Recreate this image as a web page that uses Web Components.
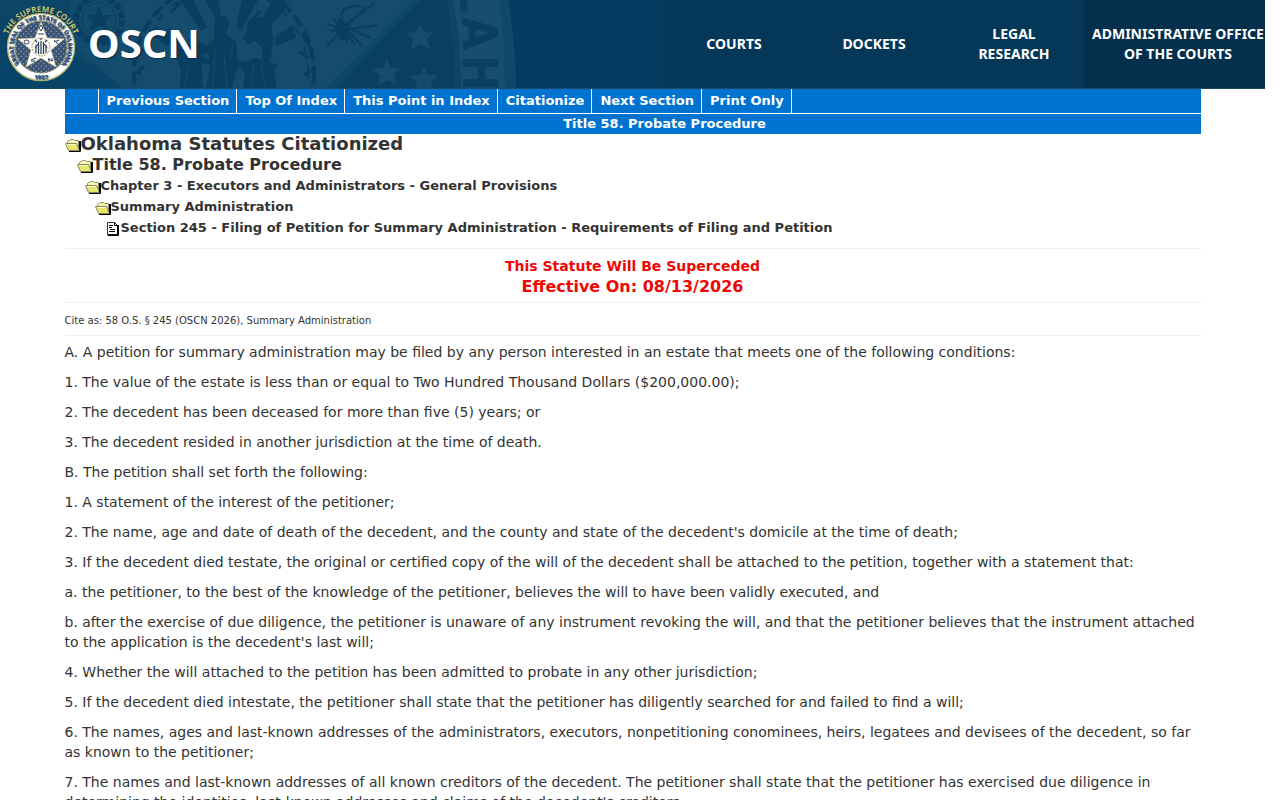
<!DOCTYPE html>
<html lang="en">
<head>
<meta charset="utf-8">
<title>OSCN - Title 58. Probate Procedure</title>
<style>
    html { background: #fff; }
    body {
        margin: 0 15px 0 0;
        color: #333;
        font-family: "DejaVu Sans", Verdana, sans-serif;
        font-size: 14px;
        line-height: 20px;
    }
    main { display: block; max-width: 1136px; margin: 0 auto; }
    statute-body p { margin: 0 0 10px; }
</style>
</head>
<body>
    <oscn-header>
        <oscn-nav-item href="#courts">COURTS</oscn-nav-item>
        <oscn-nav-item href="#dockets">DOCKETS</oscn-nav-item>
        <oscn-nav-item href="#research">LEGAL<br>RESEARCH</oscn-nav-item>
        <oscn-nav-item href="#aoc" wide>ADMINISTRATIVE OFFICE<br>OF THE COURTS</oscn-nav-item>
    </oscn-header>

    <main>
        <section-toolbar heading="Title 58. Probate Procedure">
            <toolbar-link href="#previous">Previous Section</toolbar-link>
            <toolbar-link href="#top">Top Of Index</toolbar-link>
            <toolbar-link href="#point">This Point in Index</toolbar-link>
            <toolbar-link href="#citationize">Citationize</toolbar-link>
            <toolbar-link href="#next">Next Section</toolbar-link>
            <toolbar-link href="#print">Print Only</toolbar-link>
        </section-toolbar>

        <index-tree>
            <index-node level="1">Oklahoma Statutes Citationized</index-node>
            <index-node level="2">Title 58. Probate Procedure</index-node>
            <index-node level="3">Chapter 3 - Executors and Administrators - General Provisions</index-node>
            <index-node level="4">Summary Administration</index-node>
            <index-node level="5" icon="page">Section 245 - Filing of Petition for Summary Administration - Requirements of Filing and Petition</index-node>
        </index-tree>

        <statute-notice>
            This Statute Will Be Superceded
            <span slot="date">Effective On: 08/13/2026</span>
        </statute-notice>

        <statute-body>
            <span slot="cite">Cite as: 58 O.S. § 245 (OSCN 2026), Summary Administration</span>
            <p>A. A petition for summary administration may be filed by any person interested in an estate that meets one of the following conditions:</p>
            <p>1. The value of the estate is less than or equal to Two Hundred Thousand Dollars ($200,000.00);</p>
            <p>2. The decedent has been deceased for more than five (5) years; or</p>
            <p>3. The decedent resided in another jurisdiction at the time of death.</p>
            <p>B. The petition shall set forth the following:</p>
            <p>1. A statement of the interest of the petitioner;</p>
            <p>2. The name, age and date of death of the decedent, and the county and state of the decedent's domicile at the time of death;</p>
            <p>3. If the decedent died testate, the original or certified copy of the will of the decedent shall be attached to the petition, together with a statement that:</p>
            <p>a. the petitioner, to the best of the knowledge of the petitioner, believes the will to have been validly executed, and</p>
            <p>b. after the exercise of due diligence, the petitioner is unaware of any instrument revoking the will, and that the petitioner believes that the instrument attached to the application is the decedent's last will;</p>
            <p>4. Whether the will attached to the petition has been admitted to probate in any other jurisdiction;</p>
            <p>5. If the decedent died intestate, the petitioner shall state that the petitioner has diligently searched for and failed to find a will;</p>
            <p>6. The names, ages and last-known addresses of the administrators, executors, nonpetitioning conominees, heirs, legatees and devisees of the decedent, so far as known to the petitioner;</p>
            <p>7. The names and last-known addresses of all known creditors of the decedent. The petitioner shall state that the petitioner has exercised due diligence in determining the identities, last-known addresses and claims of the decedent's creditors.</p>
        </statute-body>
    </main>

<script>
class OscnSeal extends HTMLElement {
    constructor() {
        super();
        this.attachShadow({ mode: 'open' });
        this.shadowRoot.innerHTML = `
            <style>
                :host { display: block; width: 84px; height: 88px; flex: none; }
                svg { display: block; }
                text { font-family: "Open Sans", sans-serif; font-weight: 700; text-anchor: middle; }
            </style>
            <svg width="84" height="88" viewBox="0 0 84 88" role="img" aria-label="Seal of the Supreme Court of Oklahoma">
                <defs>
                    <path id="outer" d="M6 47a35 35 0 0 1 70 0"/>
                    <path id="ring" d="M41 74.500a27.500 27.500 0 0 1 0-55a27.500 27.500 0 0 1 0 55"/>
                    <pattern id="dots" width="5" height="5" patternUnits="userSpaceOnUse">
                        <rect width="5" height="5" fill="#39527c"/>
                        <circle cx="1.200" cy="1.200" r=".8" fill="#a3aa8c"/>
                        <circle cx="3.700" cy="3.700" r=".8" fill="#939c84"/>
                    </pattern>
                </defs>
                <circle cx="41" cy="47" r="33.500" fill="#fff" stroke="#b9ba70" stroke-width="1.400"/>
                <circle cx="41" cy="47" r="26" fill="url(#dots)" stroke="#8e9670" stroke-width="1"/>
                <path d="M41 22l6 16 17 1-13 11 5 17-15-9-15 9 5-17-13-11 17-1z" fill="#fff" stroke="#d5c98e" stroke-width=".7"/>
                <circle cx="41" cy="47" r="9" fill="#f8f7ee" stroke="#a8a070" stroke-dasharray="2 1"/>
                <g stroke="#293b55" fill="none" stroke-width="1.200">
                    <path d="M36 45v8M38.500 42v12M41 41v13M43.500 42v12M46 45v8M35 48l3-4M47 48l-3-4M37 42l-2-2M45 42l2-2M41 40v-2"/>
                    <path d="M39 28l2-3 2 3-2 3zM38 34h6M24 42a2.500 2 0 1 0 5 0a2.500 2 0 1 0-5 0M54 42l5-2M54 40l4 4M31 60l5-2M31 61h4M48 59l5 2M49 58v4M52 58v3" stroke-width="1"/>
                </g>
                <text font-size="8" fill="#c4c474"><textPath href="#outer" startOffset="50%">THE SUPREME COURT</textPath></text>
                <text font-size="6" fill="#24426d"><textPath href="#ring" startOffset="50%">GREAT SEAL OF THE STATE OF OKLAHOMA</textPath></text>
                <text x="41" y="79" font-size="6" fill="#24426d">1907</text>
            </svg>
        `;
    }
}
customElements.define('oscn-seal', OscnSeal);

/* faded state seal that runs behind the left part of the header */
class SealBackdrop extends HTMLElement {
    constructor() {
        super();
        this.attachShadow({ mode: 'open' });
        this.shadowRoot.innerHTML = `
            <style>
                :host { display: block; overflow: hidden; }
                svg { display: block; }
                text { font-family: "Liberation Sans Narrow", "DejaVu Sans Condensed", "Liberation Sans", sans-serif; font-weight: 700; }
            </style>
            <svg width="530" height="88" viewBox="0 0 530 88" aria-hidden="true">
                <defs>
                    <linearGradient id="base">
                        <stop offset="0" stop-color="#08486f"/>
                        <stop offset=".3" stop-color="#154c6e"/>
                        <stop offset="1" stop-color="#154b6c"/>
                    </linearGradient>
                    <path id="star" d="M0-14l4 9 10 0-7 7 3 10-10-5-9 6 2-11-8-6 11-1z"/>
                </defs>
                <path d="M0 0h508q8 44 8 88H0z" fill="#10486b"/>
                <path d="M0 0h499q6 44 6 88H0z" fill="#174d6e"/>
                <path d="M0 0h453q8 44 8 88H0z" fill="#0d4468"/>
                <path d="M0 0h447q7 44 7 88H0z" fill="#083f62"/>
                <path d="M0 0h421L336 88H0z" fill="#0d4669"/>
                <path d="M0 0h413L326 88H122L70 42 0 0z" fill="url(#base)"/>
                <path d="M0 0L122 88H0z" fill="#084368"/>
                <path d="M0 0h70v46L0 20z" fill="#0b4568"/>
                <g fill="#164b6c">
                    <use href="#star" x="420" y="37"/>
                    <use href="#star" x="387" y="73"/>
                    <use href="#star" x="424" y="80"/>
                </g>
                <g fill="#093f63">
                    <text transform="translate(461 14) rotate(86)" text-anchor="end" font-size="48">L</text>
                    <text transform="translate(462 17) rotate(88)" font-size="48">A</text>
                    <text transform="translate(463 55) rotate(90)" font-size="48">H</text>
                </g>
                <g fill="none" stroke="#093e61">
                    <circle cx="99" cy="20" r="23" stroke-width="6" stroke-dasharray="7 2"/>
                    <circle cx="99" cy="20" r="17" stroke-width="1"/>
                    <circle cx="224" cy="72" r="90" stroke-width="4" stroke-dasharray="13 5"/>
                    <circle cx="224" cy="72" r="84" stroke-width="2" stroke-dasharray="7 13"/>
                </g>
                <g fill="#093e61">
                    <path d="M99 6l4 9h9l-7 6 3 10-9-6-9 6 3-10-7-6h9z"/>
                    <path d="M84 36h30l-6 7H90zM148 32l8-6 18 15-7 5zM180 0h13l14 27-6 4zM205 0h13l4 20h-5zM242 0h16l-17 30-5-3zM272 0h12l5 5-20 22-7-6zM275 37l18-12 3 13-20 8z"/>
                    <!-- left figure and tools -->
                    <path d="M164 31l6-4 12 18 12 11-3 32h-11l1-18-4-12zM185 46l14-5 12 8-10 8 2 31h-21z"/>
                    <!-- centre figure -->
                    <path d="M214 25q0-9 8-9 7 0 7 8l-3 10 10 8 2 22-6 24h-26l5-26-5-15 9-10z"/>
                    <!-- right figure with feather headdress -->
                    <path d="M247 23q5-8 14-6 12 5 12 25l-3 19-7 3-1-17-7-6-7 4-5-8 4-6zM242 63l12-5 12 3 8 2 2 26h-33l2-16-5-5z"/>
                    <path d="M201 57l19 4 25 1 3 5-28 1-21-6z"/>
                </g>
                <g fill="none" stroke="#093e61" stroke-width="3">
                    <path d="M266 69l12-4M183 0l-12 12M260 11l-9 11M267 14l-8 12M272 26l-12 6M274 38h-12"/>
                    <path d="M134 61l9-12M136 73l8-7M302 35l9 13M300 52l9 6M304 75l10-6"/>
                </g>
                <g fill="none" stroke="#174d6e" stroke-width="1">
                    <path d="M188 65l-3 23M215 49l-2 36M224 54l3 33M254 65l-3 21M261 67l5 20M206 40l7 3M233 44l-3 17M250 31l5 4"/>
                </g>
                <!-- pipe and feathers -->
                <g fill="none" stroke="#093e61" stroke-width="2">
                    <path d="M342 25q-3-17 8-18 8-2 11 0M327 24l14 4 33-24M330 31l13-1 34-5M327 47l16-20M343 28l12 17M345 28l18 19M347 27l23 11M333 18l11 16 3 6 2-17M336 33l17-13M350 22l17-15"/>
                </g>
                <path d="M338 18l7 3 3 18-7 2-6-10z" fill="#093e61"/>
            </svg>
        `;
    }
}
customElements.define('seal-backdrop', SealBackdrop);

class OscnNavItem extends HTMLElement {
    constructor() {
        super();
        this.attachShadow({ mode: 'open' });
        this.shadowRoot.innerHTML = `
            <style>
                :host { display: flex; flex: none; width: 140px; background: #053858; }
                :host([wide]) { width: 181px; background: #042f4d; }
                a {
                    flex: 1;
                    display: flex;
                    align-items: center;
                    justify-content: center;
                    color: #fff;
                    font: 700 14px/20px "Noto Sans", sans-serif;
                    text-align: center;
                    text-decoration: none;
                    white-space: nowrap;
                }
                :host([wide]) a { justify-content: flex-start; padding-left: 8px; }
            </style>
            <a><span><slot></slot></span></a>
        `;
    }

    connectedCallback() {
        this.shadowRoot.querySelector('a').href = this.getAttribute('href');
    }
}
customElements.define('oscn-nav-item', OscnNavItem);

class OscnHeader extends HTMLElement {
    constructor() {
        super();
        this.attachShadow({ mode: 'open' });
        this.shadowRoot.innerHTML = `
            <style>
                :host { display: block; }
                header {
                    position: relative;
                    display: flex;
                    height: 88px;
                    overflow: hidden;
                    background: linear-gradient(90deg, #043d65, #033a5e);
                    border-bottom: 1px solid #1b4966;
                }
                seal-backdrop { position: absolute; left: 0; top: 0; }
                .brand {
                    position: relative;
                    display: flex;
                    align-items: center;
                    gap: 4px;
                    color: #fff;
                    font: 700 40px/86px "Noto Sans", sans-serif;
                    text-decoration: none;
                    text-shadow: 1px 1px 1px #0b2c44;
                }
                .brand span { align-self: flex-start; }
                nav { display: flex; margin-left: auto; }
            </style>
            <header>
                <seal-backdrop></seal-backdrop>
                <a class="brand" href="#home"><oscn-seal></oscn-seal><span>OSCN</span></a>
                <nav><slot></slot></nav>
            </header>
        `;
    }
}
customElements.define('oscn-header', OscnHeader);

class ToolbarLink extends HTMLElement {
    constructor() {
        super();
        this.attachShadow({ mode: 'open' });
        this.shadowRoot.innerHTML = `
            <style>
                :host { display: block; border-right: 1px solid #fff; }
                a { display: block; padding: 0 7px 0 8px; color: #fff; text-decoration: none; white-space: nowrap; }
            </style>
            <a><slot></slot></a>
        `;
    }

    connectedCallback() {
        this.shadowRoot.querySelector('a').href = this.getAttribute('href');
    }
}
customElements.define('toolbar-link', ToolbarLink);

class SectionToolbar extends HTMLElement {
    constructor() {
        super();
        this.attachShadow({ mode: 'open' });
        this.shadowRoot.innerHTML = `
            <style>
                :host { display: block; background: #0073d1; color: #fff; font-size: 13px; font-weight: 700; }
                nav { display: flex; line-height: 24px; border-bottom: 1px solid #fff; }
                .lead { width: 33px; border-right: 1px solid #fff; }
                .heading { padding-left: 64px; text-align: center; line-height: 20px; }
            </style>
            <nav><span class="lead"></span><slot></slot></nav>
            <div class="heading"></div>
        `;
    }

    connectedCallback() {
        this.shadowRoot.querySelector('.heading').textContent = this.getAttribute('heading');
    }
}
customElements.define('section-toolbar', SectionToolbar);

const FOLDER = `
    <svg width="16" height="16" viewBox="0 0 16 16" aria-hidden="true">
        <path d="M2.500 8V5.500l1-1h1l1-1h3l1 1h4v9" fill="#f6f6b0" stroke="#8c8c6a"/>
        <path d="M.5 7.500h11l3 7h-11z" fill="#e6e66e" stroke="#85855c"/>
        <path d="M2 8.500h9" stroke="#ffffd5"/>
        <path d="M14.500 5v9.500M4 15.500h11.500V5" fill="none" stroke="#000"/>
    </svg>`;

const PAGE = `
    <svg width="16" height="16" viewBox="0 0 16 16" aria-hidden="true">
        <path d="M2.500 2.500h7l3 3v9h-10z" fill="#fff" stroke="#333"/>
        <path d="M9.500 2.500v3h3v9.500h-10" fill="none" stroke="#000"/>
        <path d="M4 5.500h4M4 7.500h3M5 9.500h5M4 11.500h6M13.500 5v10.500H3" fill="none" stroke="#000"/>
    </svg>`;

class IndexNode extends HTMLElement {
    constructor() {
        super();
        this.attachShadow({ mode: 'open' });
    }

    connectedCallback() {
        const icon = this.getAttribute('icon') === 'page' ? PAGE : FOLDER;
        this.shadowRoot.innerHTML = `
            <style>
                :host { display: block; margin-bottom: 1px; font-size: 13px; font-weight: 700; line-height: 20px; }
                :host([level="1"]) { font-size: 18px; }
                :host([level="2"]) { font-size: 16px; padding-left: 12px; }
                :host([level="3"]) { padding-left: 20px; }
                :host([level="4"]) { padding-left: 30px; }
                :host([level="5"]) { padding-left: 40px; }
                a { display: flex; align-items: center; color: inherit; text-decoration: none; }
                svg { display: block; flex: none; }
            </style>
            <a href="#level${this.getAttribute('level')}">${icon}<span><slot></slot></span></a>
        `;
    }
}
customElements.define('index-node', IndexNode);

class IndexTree extends HTMLElement {
    constructor() {
        super();
        this.attachShadow({ mode: 'open' });
        this.shadowRoot.innerHTML = `
            <style>
                :host { display: block; padding-bottom: 9px; }
            </style>
            <slot></slot>
        `;
    }
}
customElements.define('index-tree', IndexTree);

class StatuteNotice extends HTMLElement {
    constructor() {
        super();
        this.attachShadow({ mode: 'open' });
        this.shadowRoot.innerHTML = `
            <style>
                :host {
                    display: block;
                    padding: 7px 0 4px;
                    border-top: 1px solid #eee;
                    border-bottom: 1px solid #eee;
                    color: #f00505;
                    font-weight: 700;
                    text-align: center;
                }
                .date { font-size: 16px; line-height: 22px; }
            </style>
            <div><slot></slot></div>
            <div class="date"><slot name="date"></slot></div>
        `;
    }
}
customElements.define('statute-notice', StatuteNotice);

class StatuteBody extends HTMLElement {
    constructor() {
        super();
        this.attachShadow({ mode: 'open' });
        this.shadowRoot.innerHTML = `
            <style>
                :host { display: block; }
                .cite { padding: 8px 0 4px; margin-bottom: 6px; border-bottom: 1px solid #eee; font-size: 10px; }
            </style>
            <div class="cite"><slot name="cite"></slot></div>
            <slot></slot>
        `;
    }
}
customElements.define('statute-body', StatuteBody);
</script>
</body>
</html>
